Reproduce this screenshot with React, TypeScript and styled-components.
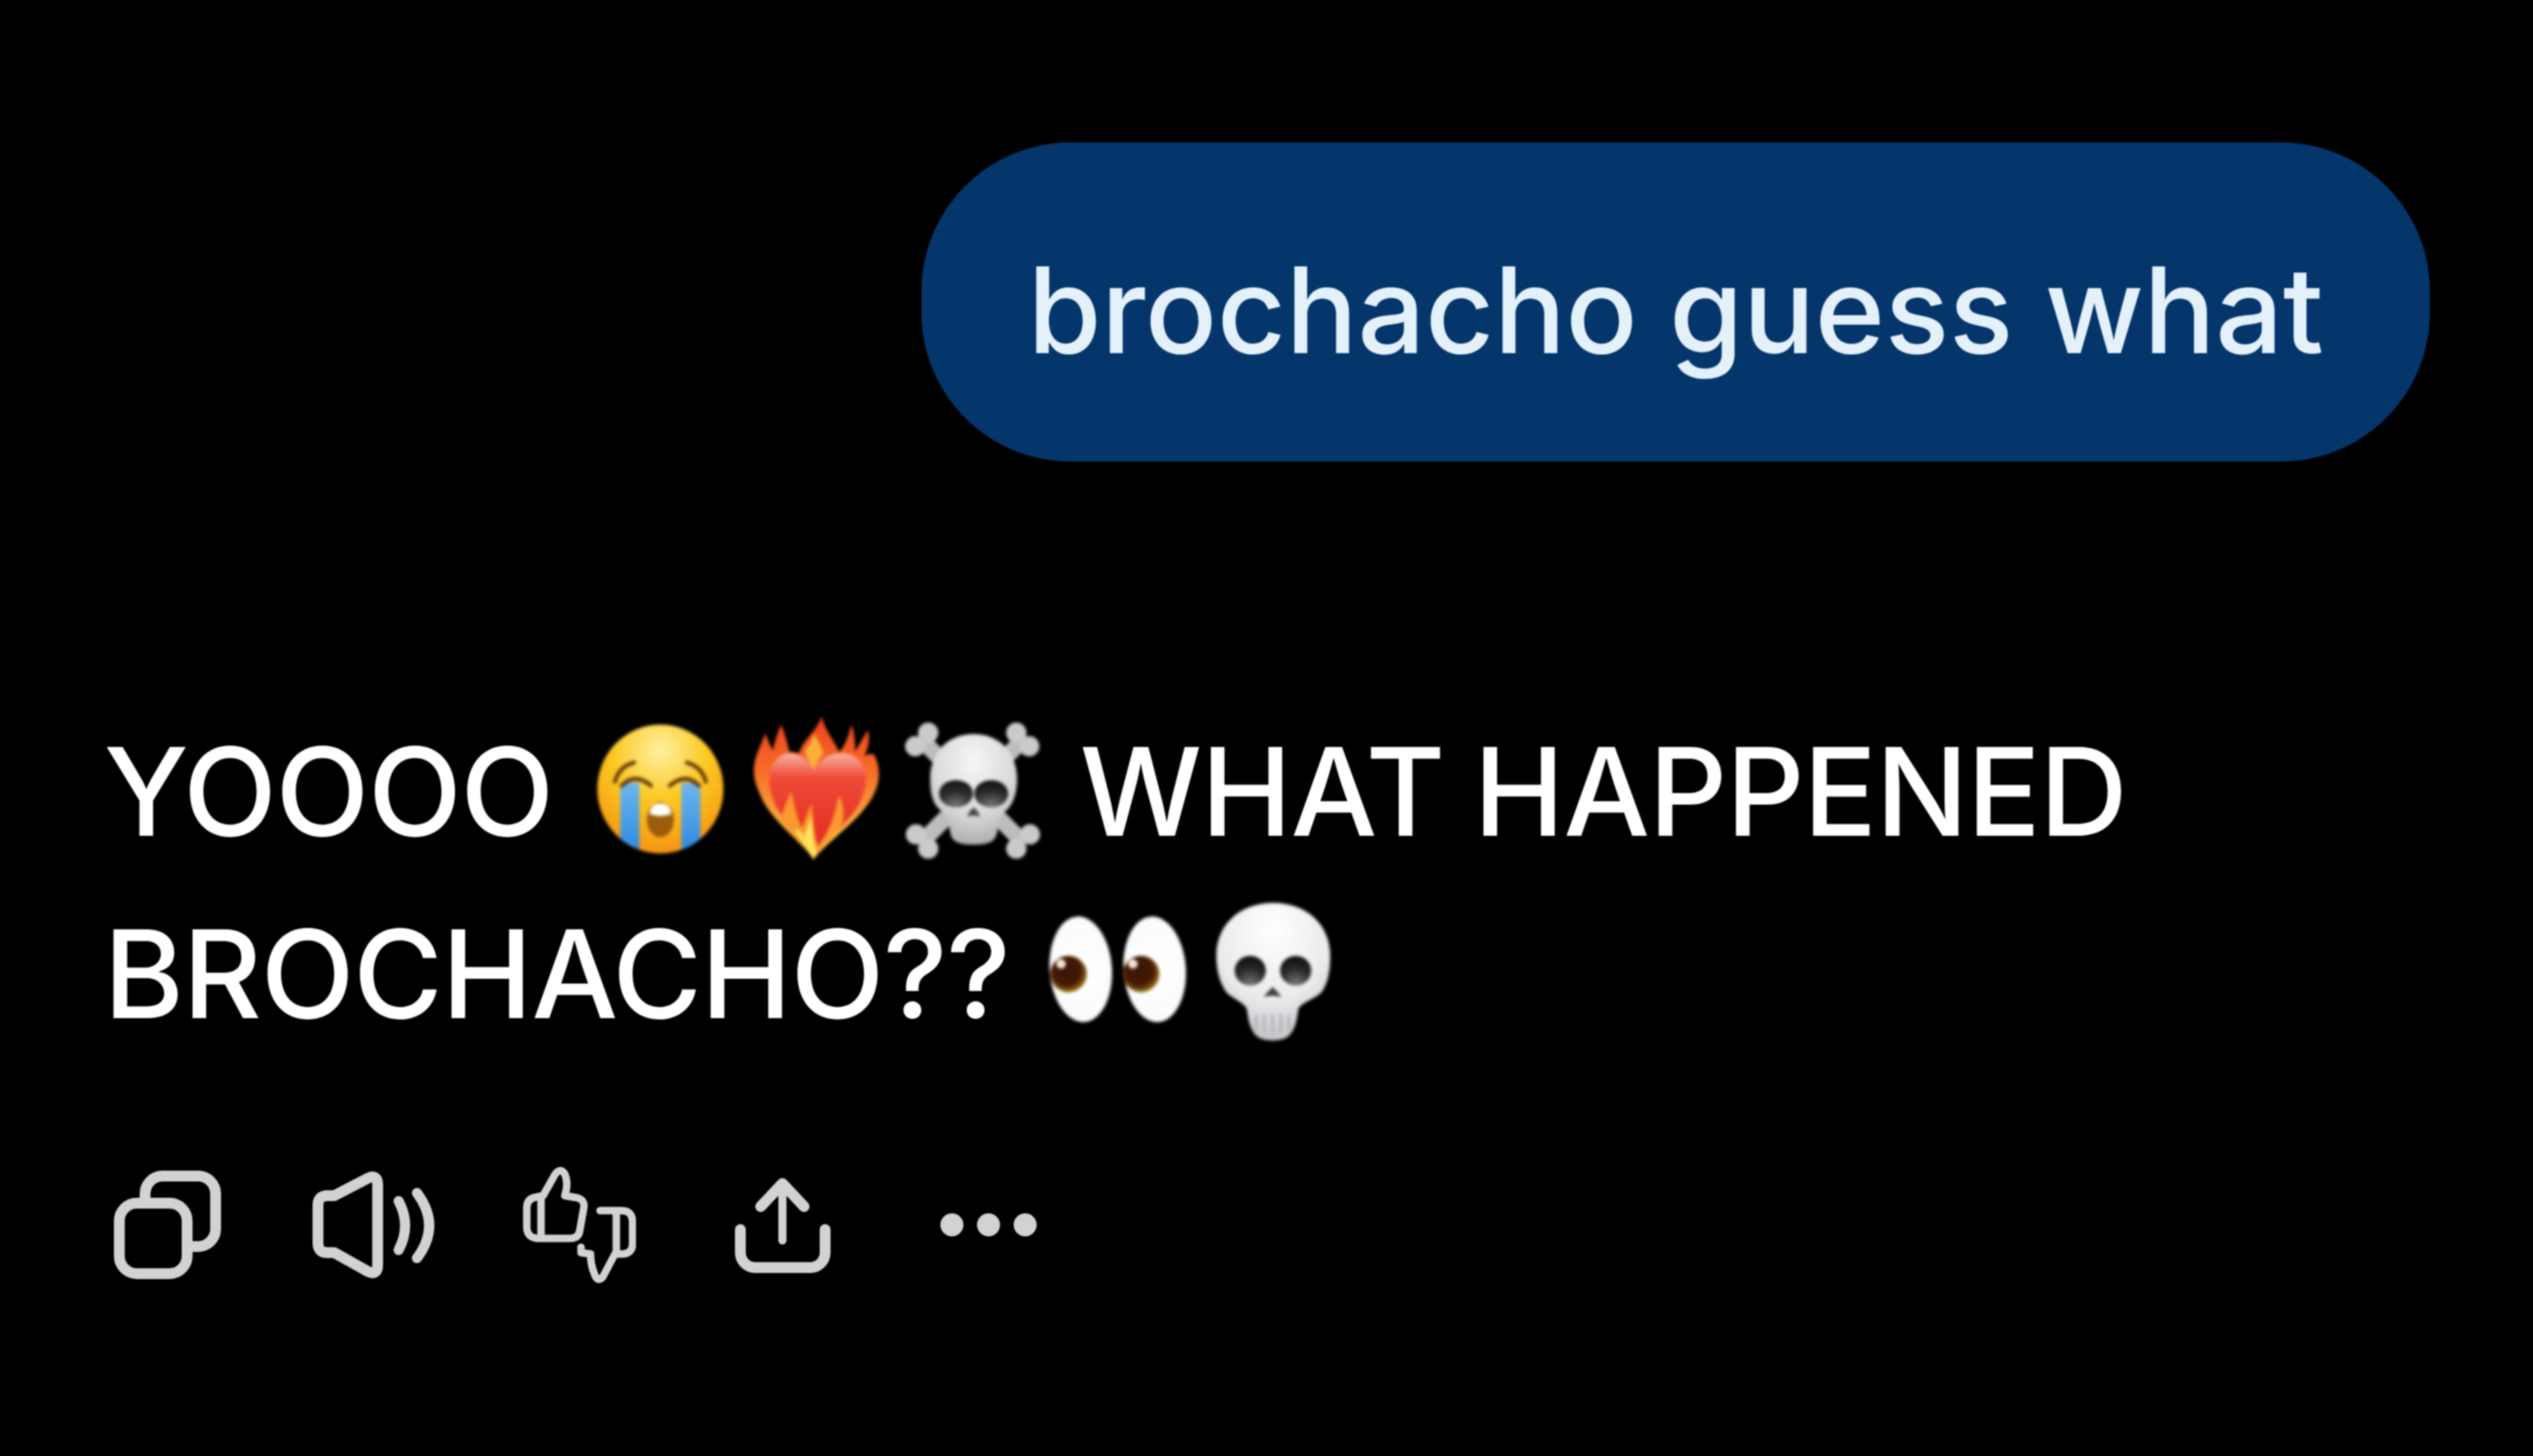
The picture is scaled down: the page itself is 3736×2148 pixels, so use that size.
import React from 'react';
import styled, { createGlobalStyle } from 'styled-components';

const GlobalStyle = createGlobalStyle`
  html, body {
    margin: 0;
    background: #000;
  }
`;

function CryingFace() {
  return (
    <Emoji viewBox="0 0 230 230">
      <defs>
        <radialGradient id="cryFace" cx="50%" cy="20%" r="85%">
          <stop offset="0" stopColor="#fff0a0" />
          <stop offset="0.45" stopColor="#fcc821" />
          <stop offset="1" stopColor="#f48f0f" />
        </radialGradient>
        <linearGradient id="cryTear" x1="0" y1="0" x2="0" y2="1">
          <stop offset="0" stopColor="#6db6ee" />
          <stop offset="1" stopColor="#2a86e0" />
        </linearGradient>
        <clipPath id="cryClip">
          <ellipse cx="115" cy="115" rx="93" ry="95" />
        </clipPath>
      </defs>
      <ellipse cx="115" cy="115" rx="93" ry="95" fill="url(#cryFace)" />
      <g clipPath="url(#cryClip)">
        <rect x="56" y="106" width="28" height="110" fill="url(#cryTear)" />
        <rect x="146" y="106" width="28" height="110" fill="url(#cryTear)" />
      </g>
      <g fill="none" stroke="#6b3f0a" strokeWidth="6" strokeLinecap="round">
        <path d="M48 104 Q54 82 76 76" />
        <path d="M182 104 Q176 82 154 76" />
        <path d="M58 110 Q78 90 101 110" />
        <path d="M129 110 Q152 90 172 110" />
      </g>
      <ellipse cx="115" cy="160" rx="20" ry="26" fill="#9c5c0c" />
      <path d="M99 152 Q100 136 115 136 Q130 136 131 152 Q115 158 99 152Z" fill="#fff" />
    </Emoji>
  );
}

function HeartOnFire() {
  return (
    <Emoji viewBox="0 0 230 230">
      <defs>
        <linearGradient id="fireOuter" x1="0" y1="0" x2="0" y2="1">
          <stop offset="0" stopColor="#ee3f1d" />
          <stop offset="0.4" stopColor="#f7702a" />
          <stop offset="0.8" stopColor="#fbb53a" />
          <stop offset="1" stopColor="#fde35c" />
        </linearGradient>
        <linearGradient id="fireHeart" x1="0" y1="0" x2="0" y2="1">
          <stop offset="0" stopColor="#f8b3a2" />
          <stop offset="0.25" stopColor="#ef4a38" />
          <stop offset="1" stopColor="#e32a1e" />
        </linearGradient>
      </defs>
      <path
        d="M111 219 C92 190 44 160 30 118 C20 96 22 78 28 62 C32 52 36 42 40 33 C44 44 47 52 51 58 C54 44 58 32 63 20 C68 32 72 46 75 60 C80 60 84 62 90 62 C94 44 114 32 123 8 C128 30 142 44 148 60 C156 56 162 38 167 20 C172 34 172 50 172 60 C178 50 184 40 191 28 C195 44 190 58 186 66 C196 62 200 62 202 68 C208 82 210 100 202 118 C186 158 132 190 111 219Z"
        fill="url(#fireOuter)"
      />
      <path
        d="M112 208 C88 180 46 150 46 102 C46 76 62 60 80 62 C94 64 104 74 111 87 C118 74 132 62 152 62 C174 62 188 78 188 102 C186 132 172 150 152 170 C134 188 122 196 112 208Z"
        fill="url(#fireHeart)"
      />
      <path
        d="M111 87 C104 74 100 66 98 60 C104 52 108 42 112 34 C118 44 122 52 126 62 C120 68 116 76 111 87Z"
        fill="#fbb03b"
      />
      <path
        d="M111 219 C100 200 78 184 62 160 C66 148 72 132 78 118 C84 146 88 162 94 172 C98 162 102 150 108 136 C110 156 112 190 118 198 C130 184 142 160 148 124 C156 138 156 152 154 164 C142 186 122 198 111 219Z"
        fill="#fb9a2e"
      />
      <path
        d="M111 219 C104 204 92 192 84 178 C88 170 92 178 96 186 C100 178 104 166 108 154 C110 172 110 196 116 208 C114 212 112 216 111 219Z"
        fill="#fee45d"
      />
    </Emoji>
  );
}

function SkullBones() {
  return (
    <Emoji viewBox="0 0 230 230">
      <defs>
        <radialGradient id="crossSkull" cx="50%" cy="25%" r="80%">
          <stop offset="0" stopColor="#f6f6f6" />
          <stop offset="0.6" stopColor="#d8d8d8" />
          <stop offset="1" stopColor="#a8a8a8" />
        </radialGradient>
        <radialGradient id="crossEye" cx="50%" cy="95%" r="90%">
          <stop offset="0" stopColor="#777" />
          <stop offset="0.6" stopColor="#2c2c2c" />
          <stop offset="1" stopColor="#141414" />
        </radialGradient>
      </defs>
      <g fill="#cacaca">
        <path d="M40 42 L190 194 M190 42 L40 194" stroke="#bdbdbd" strokeWidth="24" />
        <circle cx="31" cy="52" r="15" />
        <circle cx="50" cy="32" r="15" />
        <circle cx="180" cy="32" r="15" />
        <circle cx="199" cy="52" r="15" />
        <circle cx="32" cy="182" r="15" />
        <circle cx="50" cy="203" r="15" />
        <circle cx="180" cy="203" r="15" />
        <circle cx="200" cy="182" r="15" />
      </g>
      <path
        d="M117 34 C156 34 181 62 181 100 C181 124 174 138 166 146 C158 152 154 160 152 176 C150 192 142 197 117 197 C92 197 84 192 82 176 C80 160 76 152 68 146 C58 138 53 124 53 100 C53 62 78 34 117 34Z"
        fill="url(#crossSkull)"
      />
      <ellipse cx="91" cy="122" rx="25" ry="20" fill="url(#crossEye)" />
      <ellipse cx="143" cy="122" rx="25" ry="20" fill="url(#crossEye)" />
      <path d="M117 142 Q126 150 126 156 Q117 152 108 156 Q108 150 117 142Z" fill="#444" />
      <path d="M100 178 V194 M109 180 V196 M118 180 V196 M127 180 V196 M136 178 V194" stroke="#b2b2b2" strokeWidth="2" />
    </Emoji>
  );
}

function EyeBall({ cx, px, hx }: { cx: number; px: number; hx: number }) {
  return (
    <g>
      <ellipse cx={cx} cy="112" rx="46" ry="78" fill="url(#eyeWhite)" transform={`rotate(-4 ${cx} 112)`} />
      <circle cx={px} cy="119" r="27" fill="url(#eyeIris)" />
      <circle cx={hx} cy="104" r="7" fill="#f7e6d8" />
    </g>
  );
}

function Eyes() {
  return (
    <Emoji viewBox="0 0 230 230">
      <defs>
        <radialGradient id="eyeWhite" cx="55%" cy="50%" r="60%">
          <stop offset="0" stopColor="#ffffff" />
          <stop offset="0.85" stopColor="#fbfbfb" />
          <stop offset="1" stopColor="#dcdcdc" />
        </radialGradient>
        <radialGradient id="eyeIris" cx="45%" cy="42%" r="58%">
          <stop offset="0" stopColor="#3a1505" />
          <stop offset="0.65" stopColor="#451a04" />
          <stop offset="0.88" stopColor="#7a5210" />
          <stop offset="1" stopColor="#a0801c" />
        </radialGradient>
      </defs>
      <EyeBall cx={61} px={43} hx={32} />
      <EyeBall cx={170} px={150} hx={138} />
    </Emoji>
  );
}

function Skull() {
  return (
    <Emoji viewBox="0 0 230 230">
      <defs>
        <radialGradient id="skullBone" cx="50%" cy="20%" r="85%">
          <stop offset="0" stopColor="#ffffff" />
          <stop offset="0.6" stopColor="#e9eaec" />
          <stop offset="1" stopColor="#bcbcc0" />
        </radialGradient>
        <radialGradient id="skullEye" cx="50%" cy="95%" r="85%">
          <stop offset="0" stopColor="#777" />
          <stop offset="0.6" stopColor="#2a2a2a" />
          <stop offset="1" stopColor="#141414" />
        </radialGradient>
      </defs>
      <path
        d="M115 14 C164 14 199 46 199 92 C199 114 196 132 186 146 C176 156 158 160 152 170 C150 184 148 206 132 214 C122 218 106 218 96 214 C80 206 78 184 76 170 C70 160 56 156 46 146 C36 132 31 114 31 92 C31 46 66 14 115 14Z"
        fill="url(#skullBone)"
      />
      <ellipse cx="81" cy="114" rx="23" ry="22" fill="url(#skullEye)" />
      <ellipse cx="148" cy="114" rx="23" ry="22" fill="url(#skullEye)" />
      <path d="M114 138 Q124 148 127 153 Q114 149 101 153 Q104 148 114 138Z" fill="#3c3c3c" />
      <path d="M90 180 V202 M102 178 V205 M114 178 V206 M126 178 V205 M138 180 V202" stroke="#a9a9ad" strokeWidth="3" />
    </Emoji>
  );
}

function CopyIcon() {
  return (
    <ActionSvg width="158" height="160" viewBox="0 0 158 160">
      <rect x="8" y="48" width="100" height="104" rx="26" />
      <path d="M46 44 V34 A26 26 0 0 1 72 8 H124 A26 26 0 0 1 150 34 V86 A26 26 0 0 1 124 112 H114" />
    </ActionSvg>
  );
}

function SpeakerIcon() {
  return (
    <ActionSvg width="183" height="158" viewBox="0 0 183 158">
      <path d="M8 50 Q8 36 22 36 H32 L82 10 Q96 4 96 20 V138 Q96 154 82 148 L32 120 H22 Q8 120 8 106 Z" />
      <path d="M127 44 Q146 80 127 116" strokeWidth="15" />
      <path d="M154 32 Q190 80 154 128" strokeWidth="15" />
    </ActionSvg>
  );
}

function ThumbsIcon() {
  return (
    <ActionSvg width="167" height="173" viewBox="0 0 167 173" $stroke={11}>
      <path d="M6 62 Q6 48 20 46 L30 44 L48 12 Q56 2 62 12 Q68 26 62 44 L80 47 Q92 50 90 62 L84 96 Q82 107 70 107 H24 Q6 107 6 90 Z" />
      <path d="M27 48 V104" />
      <path d="M114 66 H146 Q162 66 162 84 V114 Q162 130 146 130 H136 L118 164 Q110 172 106 160 Q100 146 100 130 L86 128 V120" />
      <path d="M138 68 V128" />
    </ActionSvg>
  );
}

function ShareIcon() {
  return (
    <ActionSvg width="141" height="142" viewBox="0 0 141 142">
      <path d="M8 78 V112 A22 22 0 0 0 30 134 H111 A22 22 0 0 0 133 112 V78" />
      <path d="M70 94 V10" strokeWidth="12" />
      <path d="M38 44 L70 10 L102 44" />
    </ActionSvg>
  );
}

function DotsIcon() {
  return (
    <DotSvg width="145" height="36" viewBox="0 0 145 36">
      <circle cx="19" cy="18" r="17" />
      <circle cx="73" cy="18" r="17" />
      <circle cx="127" cy="18" r="17" />
    </DotSvg>
  );
}

export default function App() {
  return (
    <>
      <GlobalStyle />
      <Page>
        <UserBubble>brochacho guess what</UserBubble>
        <Reply>
          YOOOO <CryingFace />
          <HeartOnFire />
          <SkullBones /> WHAT HAPPENED BROCHACHO?? <Eyes />
          <Skull />
        </Reply>
        <Actions>
          <ActionSlot $width={307}>
            <CopyIcon />
          </ActionSlot>
          <ActionSlot $width={305}>
            <SpeakerIcon />
          </ActionSlot>
          <ActionSlot $width={298}>
            <ThumbsIcon />
          </ActionSlot>
          <ActionSlot $width={303}>
            <ShareIcon />
          </ActionSlot>
          <ActionSlot $width={303}>
            <DotsIcon />
          </ActionSlot>
        </Actions>
      </Page>
    </>
  );
}

const Page = styled.main`
  box-sizing: border-box;
  width: 3736px;
  height: 2148px;
  padding: 210px 152px 0 153px;
  display: flex;
  flex-direction: column;
  background: #000;
  font-family: Inter, 'Liberation Sans', sans-serif;
  filter: blur(1.2px);
  overflow: hidden;
`;

const UserBubble = styled.div`
  align-self: flex-end;
  box-sizing: border-box;
  height: 471px;
  padding: 22px 157px 0 157px;
  border-radius: 220px;
  background: #04356b;
  color: #e4f1fa;
  font-size: 176px;
  font-weight: 500;
  letter-spacing: -0.15px;
  line-height: 449px;
  white-space: nowrap;
`;

const Reply = styled.div`
  margin-top: 352px;
  color: #fff;
  font-size: 180px;
  font-weight: 500;
  letter-spacing: -1.6px;
  word-spacing: -3px;
  line-height: 269px;
`;

const Emoji = styled.svg`
  width: 230px;
  height: 230px;
  vertical-align: -46px;
  filter: blur(2px);
`;

const Actions = styled.div`
  display: flex;
  align-items: center;
  height: 173px;
  margin: 149px 0 0 -60px;
`;

const ActionSlot = styled.div<{ $width: number }>`
  width: ${(p) => p.$width}px;
  display: flex;
  justify-content: center;
  align-items: center;
`;

const ActionSvg = styled.svg<{ $stroke?: number }>`
  fill: none;
  stroke: #d2d2d2;
  stroke-width: ${(p) => p.$stroke ?? 16}px;
  stroke-linecap: round;
  stroke-linejoin: round;
`;

const DotSvg = styled.svg`
  fill: #d2d2d2;
`;
